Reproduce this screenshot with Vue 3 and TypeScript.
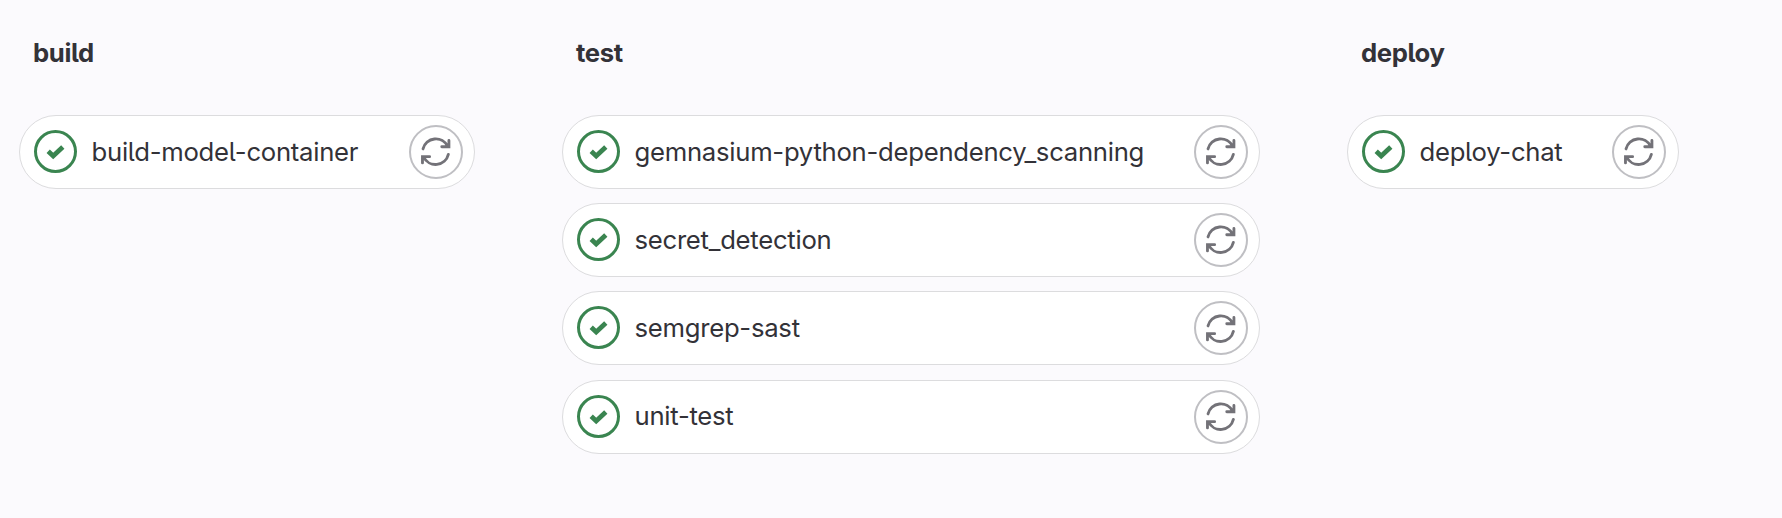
<script setup lang="ts">
interface Stage {
  name: string
  jobs: string[]
}

const stages: Stage[] = [
  { name: 'build', jobs: ['build-model-container'] },
  {
    name: 'test',
    jobs: ['gemnasium-python-dependency_scanning', 'secret_detection', 'semgrep-sast', 'unit-test'],
  },
  { name: 'deploy', jobs: ['deploy-chat'] },
]
</script>

<template>
  <main class="pipeline">
    <section v-for="stage in stages" :key="stage.name" class="stage" :class="stage.name">
      <h2 class="title">{{ stage.name }}</h2>
      <ul class="jobs">
        <li v-for="job in stage.jobs" :key="job" class="job">
          <svg class="status" viewBox="0 0 43 43" aria-hidden="true">
            <circle cx="21.5" cy="21.5" r="20" />
            <path class="tick" d="M14.2 21.3L19.2 26L28.8 17" />
          </svg>
          <span class="name">{{ job }}</span>
          <button class="retry" type="button" aria-label="Run again">
            <svg viewBox="0 0 16 16" aria-hidden="true">
              <path d="M1.1 6.5A7.15 7.15 0 0 1 14.5 5.1M15.2 1.9V5.3H11.3" />
              <path d="M14.9 9.5A7.15 7.15 0 0 1 1.5 10.9M.8 14.1V10.7H4.7" />
            </svg>
          </button>
        </li>
      </ul>
    </section>
  </main>
</template>

<style>
body {
  background: #fbfafd;
}
</style>

<style scoped>
.pipeline {
  box-sizing: border-box;
  display: flex;
  align-items: flex-start;
  gap: 87px;
  height: 518px;
  padding: 35px 0 0 19px;
  background: #fbfafd;
  color: #333238;
  font-family: Inter, "Liberation Sans", sans-serif;
  font-size: 25.7px;
  font-feature-settings: "cv05";
  letter-spacing: -0.27px;
}
.build { width: 456px; }
.test { width: 698px; }
.deploy { width: 332px; }
.title {
  margin: 0 0 44px;
  padding-left: 14px;
  font-size: 25.7px;
  font-weight: 650;
  line-height: 36px;
  letter-spacing: -0.38px;
}
.jobs {
  display: flex;
  flex-direction: column;
  gap: 14.2px;
  margin: 0;
  padding: 0;
  list-style: none;
}
.job {
  box-sizing: border-box;
  display: flex;
  align-items: center;
  height: 74px;
  padding: 0 11px 0 14px;
  border: 1px solid #dcdcde;
  border-radius: 37px;
  background: #fff;
}
.deploy .job {
  padding-right: 12px;
}
.status {
  flex: none;
  width: 43px;
  height: 43px;
  margin-bottom: 1px;
  fill: none;
  stroke: #3a8550;
  stroke-width: 3;
}
.tick {
  stroke-width: 4.8;
  stroke-linejoin: miter;
}
.name {
  flex: 1;
  margin-left: 14.5px;
  padding-bottom: 1px;
  line-height: 36px;
  white-space: nowrap;
}
.retry {
  box-sizing: border-box;
  display: flex;
  flex: none;
  align-items: center;
  justify-content: center;
  width: 54px;
  height: 54px;
  padding: 0;
  border: 2px solid #bfbfc3;
  border-radius: 50%;
  background: #fff;
}
.retry svg {
  width: 29.4px;
  height: 29.4px;
  fill: none;
  stroke: #737278;
  stroke-width: 1.55;
  stroke-linecap: round;
  stroke-linejoin: miter;
}
</style>
